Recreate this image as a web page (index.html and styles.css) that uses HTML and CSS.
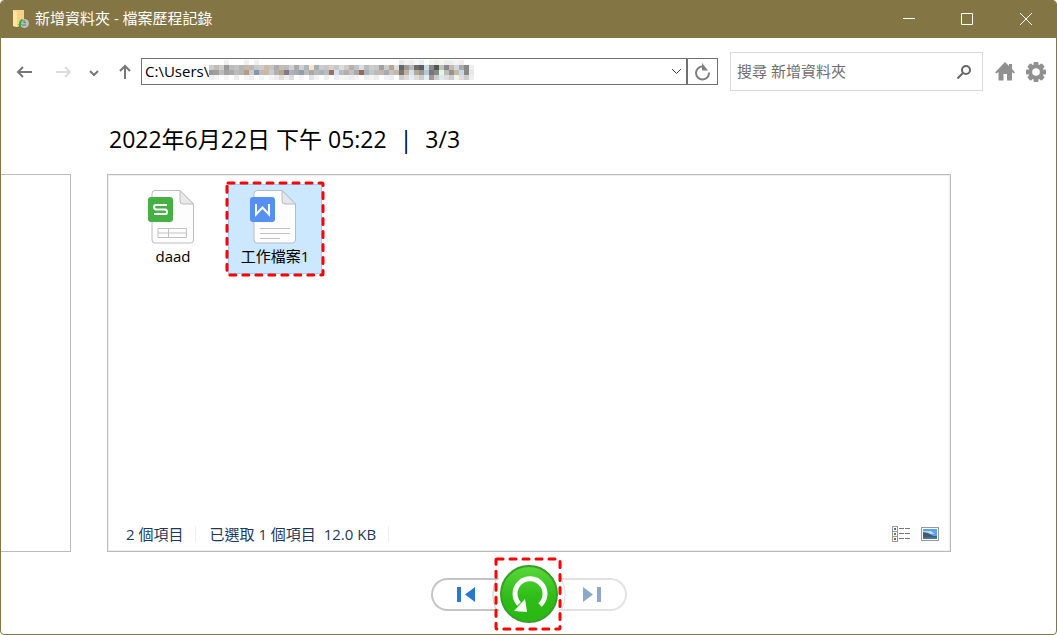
FILE: index.html
```html
<!DOCTYPE html>
<html lang="zh-Hant">
<head>
    <meta charset="UTF-8">
    <meta name="viewport" content="width=device-width, initial-scale=1.0">
    <title>新增資料夾 - 檔案歷程記錄</title>
    <link rel="stylesheet" href="styles.css">
</head>
<body>
    <div class="window">
        <header class="titlebar">
            <svg class="app-icon" width="18" height="20" viewBox="0 0 18 20">
                <path d="M1 1h11v11l-6 6-5-1z" fill="#f8d184"/>
                <path d="M1 1l4 2v15l-4-1z" fill="#ffe3a4"/>
                <circle cx="12.500" cy="14.500" r="4.500" fill="#b9c0bb"/>
                <path d="M12 11v3l2-1M10 16h4" stroke="#6f7773" fill="none"/>
                <path d="M10 10q-3 1-3 5H6l2 3 2-3H9q0-2 2-4z" fill="#28b43c"/>
            </svg>
            <span class="title">新增資料夾 - 檔案歷程記錄</span>
            <button class="caption" aria-label="最小化"><svg width="12" height="12"><path d="M0 5.500h12"/></svg></button>
            <button class="caption" aria-label="最大化"><svg width="12" height="12"><path d="M.5.5h11v11H.5z"/></svg></button>
            <button class="caption" aria-label="關閉"><svg width="12" height="12"><path d="M0 0l12 12M12 0L0 12"/></svg></button>
        </header>

        <nav class="toolbar">
            <div class="nav-buttons">
                <button class="icon-button" aria-label="上一頁"><svg width="16" height="14"><path d="M16 7H2M7 2L2 7l5 5"/></svg></button>
                <button class="icon-button faded" aria-label="下一頁"><svg width="16" height="14"><path d="M0 7h14M9 2l5 5-5 5"/></svg></button>
                <button class="icon-button" aria-label="最近的位置"><svg width="10" height="14"><path d="M1 6l4 4 4-4"/></svg></button>
                <button class="icon-button" aria-label="上移"><svg width="12" height="16"><path d="M6 15V2M1 7l5-5 5 5"/></svg></button>
            </div>
            <div class="address">
                <input class="path" type="text" value="C:\Users\" aria-label="路徑">
                <svg class="mosaic" id="mosaic" width="265" height="20" shape-rendering="crispEdges"></svg>
                <button class="drop" aria-label="顯示清單"><svg width="11" height="7"><path d="M1 1l4.500 4.500L10 1"/></svg></button>
                <button class="refresh" aria-label="重新整理"><svg width="17" height="18" viewBox="0 0 17 18"><path class="ring" d="M9 3.500A6.500 6.500 0 1 0 15 9.500"/><path class="head" d="M8 0v7.500h6z"/></svg></button>
            </div>
            <div class="search">
                <input class="search-input" type="search" placeholder="搜尋 新增資料夾" aria-label="搜尋">
                <svg width="14" height="14" viewBox="0 0 14 14"><circle cx="9" cy="5" r="4"/><path d="M6 8l-5.500 5.500"/></svg>
            </div>
            <button class="tool" aria-label="首頁">
                <svg width="20" height="19" viewBox="0 0 20 19"><path d="M10 0l4 4V2h3v5l3 3.500-1.500 1L17 10v8.500h-5V12H8.500v6.500H3.500V10L1.500 11.500 0 10.500z" fill="#909090"/></svg>
            </button>
            <button class="tool" aria-label="設定">
                <svg width="20" height="20" viewBox="-10 -10 20 20">
                    <g fill="#909090">
                        <rect x="-2.500" y="-10" width="5" height="20" rx="1"/>
                        <rect x="-2.500" y="-10" width="5" height="20" rx="1" transform="rotate(45)"/>
                        <rect x="-2.500" y="-10" width="5" height="20" rx="1" transform="rotate(90)"/>
                        <rect x="-2.500" y="-10" width="5" height="20" rx="1" transform="rotate(135)"/>
                        <circle r="7.500"/>
                    </g>
                    <circle r="3.800" fill="#fff"/>
                </svg>
            </button>
        </nav>

        <h1 class="version"><span>2022年6月22日 下午 05:22</span><span>|</span><span>3/3</span></h1>

        <main class="pages">
            <div class="page-prev"></div>
            <section class="page">
                <div class="files">
                    <button class="file">
                        <svg class="doc" width="48" height="56" viewBox="0 0 48 56">
                            <path d="M7 1.500h25L45.500 15v36a3 3 0 0 1-3 3H7a3 3 0 0 1-3-3V4.500a3 3 0 0 1 3-3z" fill="#fdfdfd" stroke="#bcbcbc"/>
                            <path d="M32 1.500V12a3 3 0 0 0 3 3h10.500z" fill="#e9e9e9" stroke="#bcbcbc"/>
                            <path d="M10 39.500h28.500v9H10zM10 44h28.500M20.500 39.500v9" fill="none" stroke="#c2c2c2"/>
                            <rect x="0" y="8" width="25" height="25" rx="3" fill="#47b045"/>
                            <path d="M19 16H8q-2 0-2 2t2 2.500h9q2 0 2 2.500t-2 2H6" fill="none" stroke="#fff" stroke-width="2"/>
                        </svg>
                        <span>daad</span>
                    </button>
                    <button class="file selected">
                        <svg class="doc" width="48" height="56" viewBox="0 0 48 56">
                            <path d="M7 1.500h25L45.500 15v36a3 3 0 0 1-3 3H7a3 3 0 0 1-3-3V4.500a3 3 0 0 1 3-3z" fill="#fdfdfd" stroke="#b4bcc4"/>
                            <path d="M32 1.500V12a3 3 0 0 0 3 3h10.500z" fill="#e4e7ea" stroke="#b4bcc4"/>
                            <path d="M10 39.500h30M10 44.500h30M10 49.500h20" fill="none" stroke="#c2c2c2"/>
                            <rect x="0" y="8" width="25" height="25" rx="3" fill="#5590f2"/>
                            <path d="M6 15v10.500l6.500-7 6.500 7V15" fill="none" stroke="#fff" stroke-width="2"/>
                        </svg>
                        <span>工作檔案1</span>
                        <svg class="mark"><rect x="2" y="2" rx="1"/></svg>
                    </button>
                </div>
                <div class="status">
                    <span class="cell">2 個項目</span>
                    <span class="cell">已選取 1 個項目&nbsp; 12.0 KB</span>
                    <button class="view" aria-label="詳細資料">
                        <svg width="19" height="16" shape-rendering="crispEdges">
                            <path d="M.5.5h5v15h-5zM.5 5.500h5M.5 10.500h5" fill="none" stroke="#999"/>
                            <path d="M7 2.500h5M13 2.500h5M7 7.500h5M13 7.500h5M7 12.500h5M13 12.500h5" stroke="#777"/>
                            <path d="M2 2h2v2H2z" fill="#4671a8"/><path d="M2 7h2v2H2z" fill="#5f8b3d"/><path d="M2 12h2v2H2z" fill="#a8541c"/>
                        </svg>
                    </button>
                    <button class="view" aria-label="大圖示">
                        <svg width="18" height="14">
                            <rect x=".5" y=".5" width="17" height="13" fill="#fff" stroke="#999"/>
                            <path d="M2 2h14v10H2z" fill="#5aa2ee"/>
                            <path d="M2 4h8l4 3H2z" fill="#b4d8f6"/>
                            <path d="M2 5l5 1 5 3h4v1H2z" fill="#4b5960"/>
                            <path d="M2 10h14v2H2z" fill="#3d76b0"/>
                        </svg>
                    </button>
                </div>
            </section>
        </main>

        <footer class="controls">
            <button class="step prev" aria-label="上一個版本"><svg width="18" height="15"><path d="M0 0h4v15H0zM18 0v15L8 7.500z"/></svg></button>
            <button class="restore" aria-label="還原">
                <svg width="58" height="58" viewBox="0 0 58 58">
                    <defs>
                        <linearGradient id="green" x1="0" y1="0" x2="0" y2="1">
                            <stop offset="0" stop-color="#5ad83a"/>
                            <stop offset=".55" stop-color="#2fbd18"/>
                            <stop offset="1" stop-color="#27b911"/>
                        </linearGradient>
                    </defs>
                    <circle cx="29" cy="29" r="28" fill="url(#green)" stroke="#3a9d2a" stroke-width="2"/>
                    <path d="M40 40A15 15 0 1 0 19 39" fill="none" stroke="#fff" stroke-width="5"/>
                    <path d="M25 34l2 13-13-1z" fill="#fff"/>
                </svg>
                <svg class="mark"><rect x="2" y="2" rx="1"/></svg>
            </button>
            <button class="step next" aria-label="下一個版本" disabled><svg width="18" height="15"><path d="M14 0h4v15h-4zM0 0v15l10-7.500z"/></svg></button>
        </footer>
    </div>

    <script>
        // Blurred part of the path, one colour per 5px cell
        var rows = [
            "fff fff fff f0f0f0 fff fff fff f0f0f0 fff f0f0f0 fff fff fff fff fff fff fff fff fff fff fff fff fff fff fff fff fff fff fff fff fff fff fff fff fff fff fff fff e8e8e8 f4f4f4 eee f4f8fa eee fff f4f4f4 eee f8f4f0 eee e8f0f4 f4f4f4 eee fff fff",
            "ccc c4bab0 ccc 999 bbb c2c2c2 b4b4b4 c6b8a6 b8b8b8 c8c8c8 ccc cbbca8 c4c4c4 adadad c4bcb2 bbb ccd0d6 aaa d0d0d0 aabac0 fae2cc a0b0ba ccc c4c8cc d8d0c8 c8c8c8 ddd ccc b8b0a8 bac4cc ddd bbb ccc c8c8c8 a0a0a0 ccc b0a8a0 ddd 666 999 b8b8b8 6c6c6c 586060 ccd8e0 888 505850 c0c0c0 888 c8b8a8 c8d8e4 aaa 888 eee",
            "999 a0a0a0 bbb a2a2a2 aaa bbb b4b4b4 b0a080 ccc 8498a8 bbb c8baa0 ccc b0b0b0 b8a488 7e7890 b0b0b8 aaa 8aa0b4 bbb aaa bcb8b0 a4b4c0 bbb 987068 d0e4f4 bbb b0b0b0 c2c2c2 aaa 986860 a4b4bc c0c8cc bbb c0b8a8 aaa c4c4c4 c8b8a0 777 c8b090 d0e4f8 b8a890 999 b8c8d8 777 888 e0f8dc bbb 949494 c8b8a0 c4d8e8 888 e8e8e8",
            "eee f4f4f4 fff f4f4f4 fff eee fff f4f4f4 eee fff f4f4f4 fff f4f4f4 eee ddd eee ddd fff f4f4f4 fff e4e4e4 f4f4f4 fff eee fff eee f8f4f0 f4f4f4 eee f4f4f4 fff eee f4f4f4 eee fff f0f4f8 eee fff ccc ddd e4ecf4 ddd ccc e4ecf4 999 ccc dde8f0 ddd ccc f0f4e8 ddd ccc eee"
        ];
        var mosaic = document.getElementById("mosaic");

        rows.forEach(function (row, y) {
            row.split(" ").forEach(function (color, x) {
                var cell = document.createElementNS("http://www.w3.org/2000/svg", "rect");
                cell.setAttribute("x", x * 5);
                cell.setAttribute("y", y * 5);
                cell.setAttribute("width", 5);
                cell.setAttribute("height", 5);
                cell.setAttribute("fill", "#" + color);
                mosaic.appendChild(cell);
            });
        });
    </script>
</body>
</html>
```

FILE: styles.css
```css
* {
    box-sizing: border-box;
}

body {
    margin: 0;
    background: #fff;
    color: #000;
    font-family: "Open Sans", "Noto Sans CJK TC", sans-serif;
    font-size: 15px;
    line-height: 20px;
}

button,
input {
    font: inherit;
    color: inherit;
    background: none;
    border: none;
    padding: 0;
    margin: 0;
}

svg {
    display: block;
    flex: none;
}

.window {
    display: flex;
    flex-direction: column;
    min-height: 100vh;
    border: 1px solid #847545;
    border-radius: 4px;
    overflow: hidden;
}

/* Title bar */
.titlebar {
    display: flex;
    align-items: center;
    height: 37px;
    padding: 0 0 1px 11px;
    background: #847545;
    color: #fff;
}

.title {
    flex: 1;
    margin-left: 5px;
    padding-bottom: 2px;
    white-space: nowrap;
}

.caption {
    display: flex;
    align-items: center;
    justify-content: center;
    width: 58px;
    height: 100%;
}

.caption:last-child {
    width: 60px;
}

.caption path {
    fill: none;
    stroke: #fff;
}

/* Toolbar */
.toolbar {
    display: flex;
    align-items: center;
    padding: 14px 10px 0 15px;
}

.nav-buttons {
    display: flex;
    align-items: center;
    width: 125px;
    gap: 20px;
}

.icon-button path {
    fill: none;
    stroke: #777;
    stroke-width: 2;
}

.icon-button:first-child {
    margin-right: 4px;
}

.icon-button:nth-child(3) {
    margin-left: -3px;
}

.icon-button.faded path {
    stroke: #ddd;
}

.address {
    position: relative;
    display: flex;
    flex: 1;
    height: 27px;
    border: 1px solid #707070;
}

.path {
    flex: 1;
    min-width: 0;
    padding: 0 0 2px 3px;
    outline: none;
}

.mosaic {
    position: absolute;
    left: 67px;
    top: 1px;
}

.drop,
.refresh {
    display: flex;
    align-items: center;
    justify-content: center;
}

.drop {
    width: 20px;
}

.drop path {
    fill: none;
    stroke: #444;
}

.refresh {
    width: 31px;
    border-left: 2px solid #707070;
}

.ring {
    fill: none;
    stroke: #808080;
    stroke-width: 2;
}

.head {
    fill: #808080;
}

.search {
    display: flex;
    align-items: center;
    width: 253px;
    height: 39px;
    margin: 0 12px;
    padding: 0 11px 0 6px;
    border: 1px solid #d9d9d9;
}

.search-input {
    flex: 1;
    min-width: 0;
    padding-bottom: 2px;
    outline: none;
}

.search-input::placeholder {
    color: #6d6d6d;
    opacity: 1;
}

.search circle,
.search path {
    fill: none;
    stroke: #666;
    stroke-width: 2;
}

.tool + .tool {
    margin-left: 11px;
}

/* Version heading */
.version {
    display: flex;
    gap: 13px;
    margin: 30px 0 0 108px;
    font-size: 23px;
    line-height: 36px;
    font-weight: 400;
}

/* Pages */
.pages {
    display: flex;
    flex: 1;
    margin-top: 17px;
}

.page-prev {
    width: 70px;
    margin-right: 36px;
    border: solid #bbb;
    border-width: 1px 1px 1px 0;
}

.page {
    display: flex;
    flex-direction: column;
    flex: 1;
    margin-right: 105px;
    border: 1px solid #bbb;
    box-shadow: inset 0 0 0 1px #eee;
}

.files {
    display: flex;
    flex: 1;
    align-items: flex-start;
    gap: 8px;
    padding: 9px 18px;
}

.file {
    position: relative;
    display: flex;
    flex-direction: column;
    align-items: center;
    width: 94px;
    height: 90px;
    padding-top: 4px;
    border: 1px solid transparent;
}

.doc {
    margin-right: 2px;
}

.file span {
    margin-top: 1px;
}

.selected {
    background: #cce8ff;
    border-color: #99d1ff;
}

.mark {
    position: absolute;
    top: -4px;
    left: -4px;
    width: 100px;
    height: 96px;
    pointer-events: none;
}

.mark rect {
    width: 96px;
    height: 92px;
    fill: none;
    stroke: #f00;
    stroke-width: 3;
    stroke-dasharray: 6 7;
    stroke-linecap: round;
}

.status {
    display: flex;
    align-items: center;
    height: 33px;
    padding: 0 11px 2px 18px;
    color: #1e395b;
}

.cell {
    padding-right: 12px;
    margin-right: 13px;
    border-right: 1px solid #eee;
    line-height: 16px;
}

.view {
    margin-left: 10px;
}

.cell + .view {
    margin-left: auto;
}

/* Playback controls */
.controls {
    display: flex;
    align-items: center;
    justify-content: center;
    height: 82px;
    padding-top: 2px;
}

.step {
    width: 98px;
    height: 33px;
    border: 2px solid #c4c4c4;
}

.prev {
    margin-right: -29px;
    padding-left: 24px;
    border-right: none;
    border-radius: 17px 0 0 17px;
    background: radial-gradient(circle at right, #fff 35px, #c8c8c8 36px, #fff 37px);
}

.next {
    margin-left: -29px;
    padding-left: 54px;
    border-color: #e2e2e2;
    border-left: none;
    border-radius: 0 17px 17px 0;
    background: radial-gradient(circle at left, #fff 35px, #ddd 36px, #fff 37px);
}

.prev path {
    fill: #2a78d0;
}

.next path {
    fill: #8ea8c8;
}

.restore {
    position: relative;
    border-radius: 50%;
    box-shadow: 0 0 0 5px #fff;
    z-index: 1;
}

.restore .mark {
    top: -8px;
    left: -6px;
    width: 68px;
    height: 74px;
}

.restore .mark rect {
    width: 64px;
    height: 70px;
}
```
